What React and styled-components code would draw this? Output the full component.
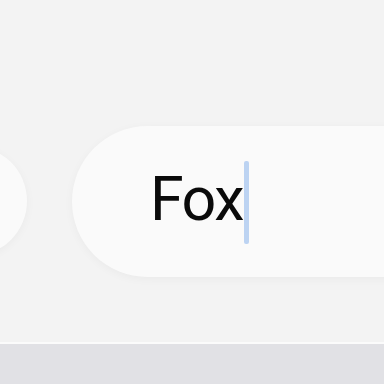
import React from 'react';
import styled, { createGlobalStyle } from 'styled-components';

const Global = createGlobalStyle`
  html, body { margin: 0; padding: 0; background: #f3f3f3; }
  body { font-family: Roboto, "Liberation Sans", Arial, sans-serif; }
`;

const Screen = styled.div`
  width: 384px;
  height: 384px;
  overflow: hidden;
  display: flex;
  flex-direction: column;
  background: #f3f3f3;
`;

const Stage = styled.div`
  height: 342px;
  display: flex;
  align-items: center;
  gap: 45px;
  padding-top: 60px;
  box-sizing: border-box;
`;

const Pill = styled.div`
  flex: none;
  width: ${p => p.$w}px;
  height: ${p => p.$h}px;
  margin-left: ${p => p.$offset || 0}px;
  border-radius: ${p => p.$h / 2}px;
  background: #fafafa;
  box-shadow: 0 2px 10px rgba(0, 0, 0, 0.04);
  display: flex;
  align-items: center;
  box-sizing: border-box;
  padding-left: 78px;
`;

const Text = styled.span`
  font-family: Roboto, "Liberation Sans", Arial, sans-serif;
  font-size: 61px;
  letter-spacing: -1.5px;
  color: #0a0a0a;
  line-height: 1;
  padding-bottom: 3px;
`;

const Caret = styled.span`
  display: inline-block;
  width: 5px;
  height: 83px;
  margin-left: 1px;
  margin-top: 2px;
  border-radius: 2px;
  background: #bcd3f2;
`;

const BottomBar = styled.div`
  flex: 1;
  background: #e1e1e5;
  border-top: 2px solid #fbfbfb;
`;

export default function App() {
  return (
    <Screen>
      <Global />
      <Stage>
        <Pill $w={150} $h={110} $offset={-123} />
        <Pill $w={420} $h={151}>
          <Text>Fox</Text>
          <Caret />
        </Pill>
      </Stage>
      <BottomBar />
    </Screen>
  );
}
